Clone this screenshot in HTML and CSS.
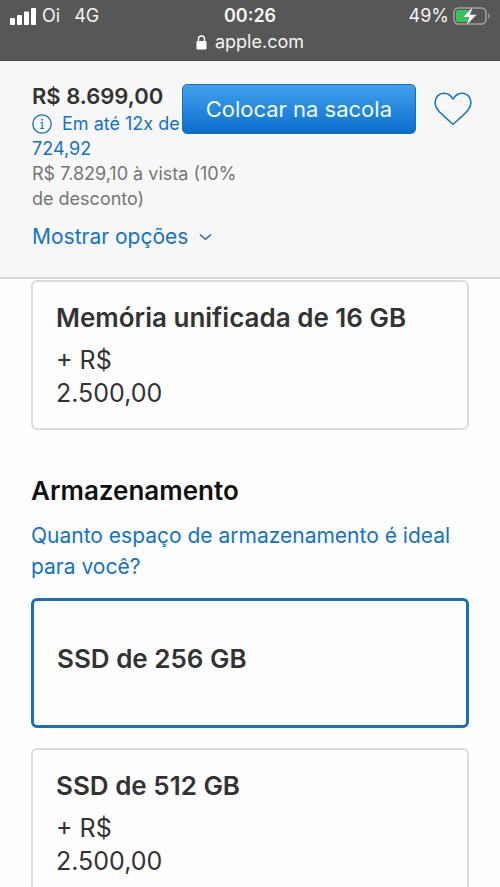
FILE: index.html
```html
<!DOCTYPE html>
<html lang="pt-BR">
<head>
<meta charset="utf-8">
<meta name="viewport" content="width=device-width, initial-scale=1">
<title>apple.com</title>
<link rel="stylesheet" href="styles.css">
</head>
<body>
<header class="status">
  <div class="status-row">
    <div class="carrier">
      <svg class="signal" width="26" height="17" viewBox="0 0 26 17" fill="#fff" aria-hidden="true"><rect x="0" y="10" width="5" height="7" rx="1"/><rect x="7" y="7" width="5" height="10" rx="1"/><rect x="14" y="3.500" width="5" height="13.500" rx="1"/><rect x="21" y="0" width="5" height="17" rx="1"/></svg>
      <span>Oi</span>
      <span class="network">4G</span>
    </div>
    <strong class="clock">00:26</strong>
    <div class="power">
      <span>49%</span>
      <svg width="37" height="22" viewBox="0 0 37 22" aria-hidden="true"><rect x="1" y="3" width="32" height="16" rx="4.500" fill="none" stroke="#a3a3a3" stroke-width="1.500"/><path d="M35 8.500c2 .6 2 4.400 0 5z" fill="#a3a3a3"/><rect x="3" y="5" width="14" height="12" rx="2.500" fill="#35c759"/><path d="M20.500 1 9.500 12.300h6.400L12.800 21 24 9.500h-6.700z" fill="#fff" stroke="#575757" stroke-width=".6"/></svg>
    </div>
  </div>
  <div class="address">
    <svg width="11" height="15" viewBox="0 0 11 15" aria-hidden="true"><rect x="0.500" y="6" width="10" height="8.500" rx="1.300" fill="#fff"/><path d="M2.500 7V4a3 3 0 0 1 6 0v3" fill="none" stroke="#fff" stroke-width="1.400"/></svg>
    <span>apple.com</span>
  </div>
</header>

<section class="summary">
  <div class="prices">
    <p class="total">R$ 8.699,00</p>
    <a class="installments" href="#parcelas"><svg class="info" width="20" height="20" viewBox="0 0 20 20" aria-hidden="true"><circle cx="10" cy="10" r="9.200" fill="none" stroke="#1273c8" stroke-width="1.300"/><circle cx="10" cy="5.800" r="1" fill="#1273c8"/><path d="M8.500 8.500h1.700v6M8.200 14.500h3.900" fill="none" stroke="#1273c8" stroke-width="1.200"/></svg>Em até 12x de R$ 724,92</a>
    <p class="cash">R$ 7.829,10 à vista (10% de desconto)</p>
  </div>
  <button class="toggle" type="button">Mostrar opções
    <svg width="13" height="8" viewBox="0 0 13 8" aria-hidden="true"><path d="M1 1.500 6.500 6.300 12 1.500" fill="none" stroke="#1273c8" stroke-width="1.600"/></svg>
  </button>
  <div class="actions">
    <button class="add" type="button">Colocar na sacola</button>
    <button class="favorite" type="button" aria-label="Salvar nos favoritos">
      <svg width="38" height="34" viewBox="0 0 38 34" aria-hidden="true"><path d="M19 32.200C13 27 7.500 22.500 4.300 18.600 1.800 15.600 1 13.500 1 10.500 1 5.200 5 1.200 9.900 1.200c3.900 0 6.900 1.900 9.100 6 2.200-4.100 5.200-6 9.100-6C33 1.200 37 5.200 37 10.500c0 3-.8 5.100-3.300 8.100C30.500 22.500 25 27 19 32.200z" fill="none" stroke="#1273c8" stroke-width="1.500" stroke-linejoin="round"/></svg>
    </button>
  </div>
</section>

<main class="options">
  <label class="card">
    <input type="radio" name="memory">
    <span class="name">Memória unificada de 16 GB</span>
    <span class="extra">+ R$ 2.500,00</span>
  </label>

  <h2>Armazenamento</h2>
  <a class="help" href="#armazenamento">Quanto espaço de armazenamento é ideal para você?</a>

  <div class="group">
    <label class="card base">
      <input type="radio" name="storage" checked>
      <span class="name">SSD de 256 GB</span>
    </label>
    <label class="card">
      <input type="radio" name="storage">
      <span class="name">SSD de 512 GB</span>
      <span class="extra">+ R$ 2.500,00</span>
    </label>
  </div>
</main>
</body>
</html>
```
FILE: styles.css
```css
* { box-sizing: border-box; }

body {
  margin: 0;
  height: 100vh;
  display: flex;
  flex-direction: column;
  font-family: Inter, "Liberation Sans", sans-serif;
  color: #333;
  background: #fefefe;
}

p, h2 { margin: 0; }
a { color: #1273c8; text-decoration: none; }
button {
  font: inherit;
  padding: 0;
  border: 0;
  background: none;
  color: #1273c8;
  cursor: pointer;
}

.status {
  flex: none;
  padding: 4px 10px 4px 10px;
  background: #575757;
  border-bottom: 1px solid #484848;
  color: #f4f4f4;
  font-size: 18px;
}
.status-row {
  display: grid;
  grid-template-columns: 1fr auto 1fr;
  align-items: center;
  line-height: 24px;
}
.carrier, .power { display: flex; align-items: center; gap: 6px; }
.power { justify-content: flex-end; gap: 4px; }
.network { margin-left: 8px; }
.clock { font-weight: 600; }
.address {
  display: flex;
  justify-content: center;
  align-items: center;
  gap: 8px;
  line-height: 28px;
}

.summary {
  position: relative;
  flex: none;
  padding: 20px 32px 26px;
  background: #f7f7f7;
  border-bottom: 2px solid #d6d6d6;
}
.prices { width: 216px; font-size: 18px; line-height: 25px; }
.total { font-size: 22px; font-weight: 600; line-height: 30px; }
.installments { display: block; }
.info { margin-right: 10px; vertical-align: -4px; }
.cash { color: #757575; }
.toggle {
  display: flex;
  align-items: center;
  gap: 11px;
  margin-top: 12px;
  font-size: 21px;
  line-height: 28px;
}
.actions {
  position: absolute;
  top: 23px;
  right: 28px;
  display: flex;
  align-items: center;
  gap: 18px;
}
.add {
  padding: 0 23px;
  border: 1px solid #1470b8;
  border-radius: 5px;
  background: linear-gradient(#42a1ec, #0a6fcd);
  color: #f2faff;
  font-size: 22px;
  line-height: 48px;
}
.favorite { display: flex; }

.options {
  flex: 1;
  min-height: 0;
  padding: 0 31px;
  overflow-y: auto;
  scrollbar-width: none;
}
.options > .card { margin-top: 1px; }
.card {
  position: relative;
  display: flex;
  flex-direction: column;
  justify-content: center;
  min-height: 150px;
  padding: 18px 23px;
  border: 2px solid #dcdcdc;
  border-radius: 6px;
  font-size: 25px;
  line-height: 33px;
}
.card input { position: absolute; opacity: 0; margin: 0; }
.card:has(input:checked) { border: 3px solid #1670bf; }
.base { min-height: 130px; }
.name { margin-bottom: 10px; font-size: 26px; font-weight: 600; }
.extra { width: 120px; }

h2 {
  margin-top: 44px;
  color: #111;
  font-size: 26px;
  font-weight: 600;
  line-height: 34px;
}
.help {
  display: block;
  margin: 12px 0 16px;
  font-size: 21px;
  line-height: 31px;
}
.group { display: grid; gap: 20px; }
```
